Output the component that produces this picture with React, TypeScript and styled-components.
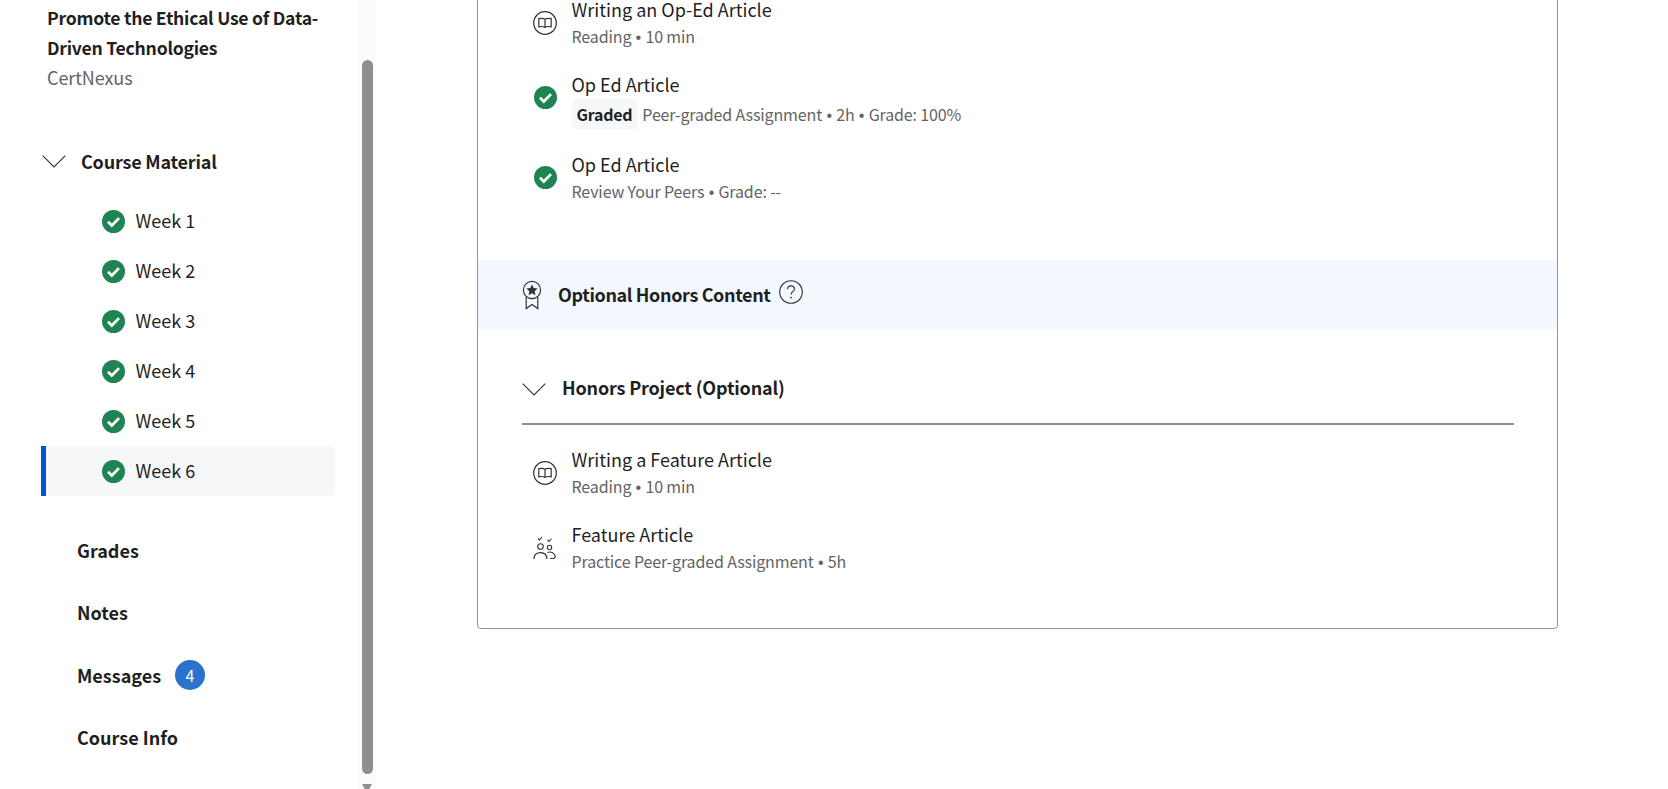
import React from 'react'
import styled, { createGlobalStyle } from 'styled-components'

const GlobalStyle = createGlobalStyle`
  html, body {
    margin: 0;
    padding: 0;
    background: #fff;
    color: #1f1f1f;
    font-family: "Noto Sans CJK SC", "Noto Sans", sans-serif;
  }
`

const Shell = styled.div`
  display: flex;
  height: 789px;
  overflow: hidden;
`

const Sidebar = styled.aside`
  width: 358px;
  flex: none;
  padding: 3px 0 0 41px;
  box-sizing: border-box;
`

const CourseHead = styled.div`
  padding-left: 6px;
  width: 290px;
`

const CourseTitle = styled.div`
  font-size: 17.6px;
  line-height: 30px;
  font-weight: 700;
  letter-spacing: -0.25px;
`

const CoursePartner = styled.div`
  margin-top: -1px;
  font-size: 18px;
  line-height: 30px;
  color: #636363;
  letter-spacing: -0.1px;
`

const SectionToggle = styled.div`
  display: flex;
  align-items: center;
  gap: 15px;
  height: 30px;
  margin-top: 54px;
  padding-left: 1px;
  font-size: 18px;
  font-weight: 700;
  letter-spacing: -0.2px;
`

const Weeks = styled.div`
  display: flex;
  flex-direction: column;
  margin-top: 20px;
  width: 294px;
`

const WeekRow = styled.div<{ $active?: boolean }>`
  display: flex;
  align-items: center;
  gap: 10px;
  height: 50px;
  padding-left: 61px;
  box-sizing: border-box;
  font-size: 18px;
  color: #1f1f1f;
  border-radius: 0 6px 6px 0;
  background: ${({ $active }) => ($active ? '#f5f7f8' : 'transparent')};
  box-shadow: ${({ $active }) => ($active ? 'inset 5px 0 0 #0056d2' : 'none')};
`

const WeekLabel = styled.span`
  margin: -2px 0 0 0.5px;
`

const SideNav = styled.nav`
  display: flex;
  flex-direction: column;
  gap: 32.4px;
  margin-top: 39px;
  padding-left: 36px;
`

const SideLink = styled.div`
  display: flex;
  align-items: center;
  gap: 14px;
  height: 30px;
  font-size: 18px;
  font-weight: 700;
`

const CountBadge = styled.span`
  display: flex;
  align-items: center;
  justify-content: center;
  width: 30px;
  height: 30px;
  border-radius: 50%;
  background: #2a73cc;
  color: #fff;
  font-size: 16px;
  font-weight: 400;
`

const ScrollTrack = styled.div`
  width: 18px;
  flex: none;
  background: #fcfcfc;
  display: flex;
  flex-direction: column;
  align-items: center;
`

const ScrollThumb = styled.div`
  width: 11px;
  height: 714px;
  margin-top: 60px;
  flex: none;
  border-radius: 6px;
  background: #8f8f8f;
`

const ScrollArrow = styled.div`
  width: 0;
  height: 0;
  flex: none;
  margin-top: 10px;
  border-left: 5.5px solid transparent;
  border-right: 5.5px solid transparent;
  border-top: 9px solid #8f8f8f;
`

const Main = styled.main`
  flex: 1;
  padding-left: 101px;
`

const Card = styled.section`
  width: 1081px;
  height: 659px;
  margin-top: -30px;
  box-sizing: border-box;
  border: 1px solid #929292;
  border-radius: 4px;
  padding-top: 23px;
`

const ItemList = styled.div<{ $top?: number }>`
  display: flex;
  flex-direction: column;
  gap: 18px;
  padding: 0 0 0 50px;
  margin-top: ${({ $top }) => $top ?? 0}px;
`

const Item = styled.div`
  display: flex;
  align-items: center;
  gap: 9.5px;
`

const ItemIcon = styled.div<{ $lift?: boolean }>`
  width: 34px;
  height: 34px;
  display: flex;
  align-items: center;
  justify-content: center;
  flex: none;
  margin-bottom: ${({ $lift }) => ($lift ? '6px' : '0')};
`

const ItemBody = styled.div`
  display: flex;
  flex-direction: column;
`

const ItemTitle = styled.div`
  font-size: 18px;
  line-height: 30px;
  height: 27px;
  color: #1f1f1f;
`

const ItemMeta = styled.div<{ $graded?: boolean }>`
  display: flex;
  align-items: center;
  gap: 5px;
  height: 30px;
  margin: ${({ $graded }) => ($graded ? '3px 0 2px' : '0')};
  font-size: 16px;
  letter-spacing: -0.13px;
  color: #636363;
`

const Bullet = styled.span`
  font-family: "Liberation Sans", sans-serif;
`

const GradedPill = styled.span`
  display: flex;
  align-items: center;
  height: 30px;
  padding: 0 5px;
  border-radius: 4px;
  background: #f5f7f8;
  color: #1f1f1f;
  font-weight: 700;
  letter-spacing: -0.25px;
`

const HonorsBand = styled.div`
  display: flex;
  align-items: center;
  height: 70px;
  margin-top: 54px;
  padding-left: 44px;
  background: #f3f8ff;
  font-size: 18px;
  font-weight: 700;
`

const BandLabel = styled.span`
  margin: -3px 8px 0 16px;
  letter-spacing: -0.37px;
`

const HelpWrap = styled.span`
  display: flex;
  margin-top: -6px;
`

const ModuleHeader = styled.div`
  display: flex;
  align-items: center;
  gap: 16px;
  height: 59px;
  margin: 28px 43px 0 44px;
  font-size: 18px;
  font-weight: 700;
  letter-spacing: -0.17px;

  svg {
    margin-top: 3px;
  }
`

const ModuleLabel = styled.span`
  margin-top: -2px;
`

const ModuleRule = styled.hr`
  height: 2px;
  margin: 6px 43px 0 44px;
  border: 0;
  background: #8f8f8f;
`

function CheckIcon() {
  return (
    <svg width="23" height="23" viewBox="0 0 23 23" aria-hidden>
      <circle cx="11.5" cy="11.5" r="11.5" fill="#1f8354" />
      <path d="M6 11.7l3.8 3.8 7.2-7.4" fill="none" stroke="#fff" strokeWidth="2.7" />
    </svg>
  )
}

function Chevron() {
  return (
    <svg width="24" height="13" viewBox="0 0 24 13" aria-hidden>
      <path d="M.7.7L12 12l11.3-11.3" fill="none" stroke="#333" strokeWidth="1.1" />
    </svg>
  )
}

function ReadingIcon() {
  return (
    <svg width="24" height="24" viewBox="0 0 24 24" aria-hidden>
      <circle cx="12" cy="12" r="11.3" fill="none" stroke="#333" strokeWidth="1.2" />
      <path
        d="M12 8.2C10.5 7.3 7.6 7.3 5.8 7.7v8.1c1.9-.4 4.6-.4 6.2.6 1.6-1 4.3-1 6.2-.6V7.7c-1.8-.4-4.7-.4-6.2.5zM12 8.2v8.2"
        fill="none"
        stroke="#333"
        strokeWidth="1.2"
      />
    </svg>
  )
}

function PeersIcon() {
  return (
    <svg width="24" height="24" viewBox="0 0 24 24" aria-hidden>
      <g fill="none" stroke="#333" strokeWidth="1.1">
        <circle cx="7.5" cy="10.5" r="2.8" />
        <circle cx="16.5" cy="11.5" r="2.2" />
        <path d="M1 23c0-4 2.6-6.4 6.5-6.4S14 19 14 23" />
        <path d="M14.5 16.5c3.5-1.3 7.3.4 7.8 3.8 0 1.3-.8 2.2-2.3 2.2h-2.8" />
        <path d="M5 2.5l1.5 1.5 2.4-3M14.5 4l1.5 1.5 2.4-3" />
      </g>
    </svg>
  )
}

function HonorsIcon() {
  return (
    <svg width="20" height="30" viewBox="0 0 20 30" aria-hidden>
      <circle cx="10" cy="10" r="8.6" fill="none" stroke="#333" strokeWidth="1.2" />
      <path d="M10 4.5l1.7 3.6 3.9.5-2.900 2.700.8 3.900-3.500-2-3.500 2 .8-3.900-2.900-2.700 3.900-.5z" fill="#333" />
      <path d="M4.2 17v11.500l5.800-4 5.800 4V17" fill="none" stroke="#333" strokeWidth="1.2" />
    </svg>
  )
}

function HelpIcon() {
  return (
    <svg width="24" height="24" viewBox="0 0 24 24" aria-hidden>
      <circle cx="12" cy="12" r="11.3" fill="none" stroke="#333" strokeWidth="1.1" />
      <path d="M8.6 9.300c0-2.200 1.500-3.400 3.400-3.400s3.400 1.200 3.400 3.100c0 2.700-3.400 2.600-3.400 5.500" fill="none" stroke="#333" strokeWidth="1.1" />
      <circle cx="12" cy="17.6" r=".9" fill="#333" />
    </svg>
  )
}

const weeks = ['Week 1', 'Week 2', 'Week 3', 'Week 4', 'Week 5', 'Week 6']
const links = ['Grades', 'Notes', 'Messages', 'Course Info']

// real text, with the bullet set in a narrower font than the CJK family gives
function Meta({ parts }: { parts: string[] }) {
  return (
    <span>
      {parts.map((part, i) => (
        <React.Fragment key={part}>
          {i > 0 && <Bullet> • </Bullet>}
          {part}
        </React.Fragment>
      ))}
    </span>
  )
}

export default function App() {
  return (
    <>
      <GlobalStyle />
      <Shell>
        <Sidebar>
          <CourseHead>
            <CourseTitle>Promote the Ethical Use of Data-Driven Technologies</CourseTitle>
            <CoursePartner>CertNexus</CoursePartner>
          </CourseHead>

          <SectionToggle>
            <Chevron />
            Course Material
          </SectionToggle>

          <Weeks>
            {weeks.map((week) => (
              <WeekRow key={week} $active={week === 'Week 6'}>
                <CheckIcon />
                <WeekLabel>{week}</WeekLabel>
              </WeekRow>
            ))}
          </Weeks>

          <SideNav>
            {links.map((link) => (
              <SideLink key={link}>
                {link}
                {link === 'Messages' && <CountBadge>4</CountBadge>}
              </SideLink>
            ))}
          </SideNav>
        </Sidebar>

        <ScrollTrack>
          <ScrollThumb />
          <ScrollArrow />
        </ScrollTrack>

        <Main>
          <Card>
            <ItemList>
              <Item>
                <ItemIcon>
                  <ReadingIcon />
                </ItemIcon>
                <ItemBody>
                  <ItemTitle>Writing an Op-Ed Article</ItemTitle>
                  <ItemMeta>
                    <Meta parts={['Reading', '10 min']} />
                  </ItemMeta>
                </ItemBody>
              </Item>
              <Item>
                <ItemIcon $lift>
                  <CheckIcon />
                </ItemIcon>
                <ItemBody>
                  <ItemTitle>Op Ed Article</ItemTitle>
                  <ItemMeta $graded>
                    <GradedPill>Graded</GradedPill>
                    <Meta parts={['Peer-graded Assignment', '2h', 'Grade: 100%']} />
                  </ItemMeta>
                </ItemBody>
              </Item>
              <Item>
                <ItemIcon>
                  <CheckIcon />
                </ItemIcon>
                <ItemBody>
                  <ItemTitle>Op Ed Article</ItemTitle>
                  <ItemMeta>
                    <Meta parts={['Review Your Peers', 'Grade: --']} />
                  </ItemMeta>
                </ItemBody>
              </Item>
            </ItemList>

            <HonorsBand>
              <HonorsIcon />
              <BandLabel>Optional Honors Content</BandLabel>
              <HelpWrap>
                <HelpIcon />
              </HelpWrap>
            </HonorsBand>

            <ModuleHeader>
              <Chevron />
              <ModuleLabel>Honors Project (Optional)</ModuleLabel>
            </ModuleHeader>
            <ModuleRule />

            <ItemList $top={19}>
              <Item>
                <ItemIcon>
                  <ReadingIcon />
                </ItemIcon>
                <ItemBody>
                  <ItemTitle>Writing a Feature Article</ItemTitle>
                  <ItemMeta>
                    <Meta parts={['Reading', '10 min']} />
                  </ItemMeta>
                </ItemBody>
              </Item>
              <Item>
                <ItemIcon>
                  <PeersIcon />
                </ItemIcon>
                <ItemBody>
                  <ItemTitle>Feature Article</ItemTitle>
                  <ItemMeta>
                    <Meta parts={['Practice Peer-graded Assignment', '5h']} />
                  </ItemMeta>
                </ItemBody>
              </Item>
            </ItemList>
          </Card>
        </Main>
      </Shell>
    </>
  )
}
